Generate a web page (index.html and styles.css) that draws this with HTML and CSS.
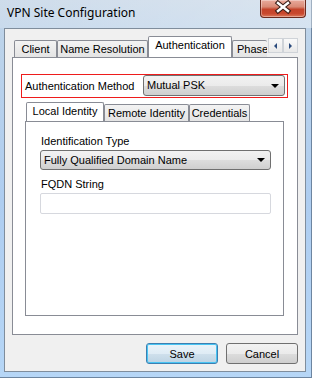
FILE: index.html
```html
<!DOCTYPE html>
<html>
<head>
    <title>VPN Site Configuration</title>
    <link rel="stylesheet" href="styles.css">
</head>
<body>
    <div class="window">
        <div class="titlebar">
            <span class="title">VPN Site Configuration</span>
            <div class="close">
                <svg width="46" height="18" viewBox="0 0 46 18">
                    <path d="M18 4 L28 12 M28 4 L18 12" stroke="#3a1e18" stroke-width="4.6" stroke-linecap="square"/>
                    <path d="M18 4 L28 12 M28 4 L18 12" stroke="#ffffff" stroke-width="2.4" stroke-linecap="square"/>
                </svg>
            </div>
        </div>

        <div class="client">
            <div class="tabctl outer">
                <div class="tabstrip">
                    <div class="tabs">
                        <div class="tab t-client">Client</div>
                        <div class="tab t-names">Name Resolution</div>
                        <div class="tab active t-auth">Authentication</div>
                        <div class="tab t-phase">Phase</div>
                    </div>
                    <div class="scroller">
                        <span class="sbtn"><i class="tri left"></i></span>
                        <span class="sbtn"><i class="tri right"></i></span>
                    </div>
                </div>
                <div class="panel">
                    <div class="method">
                        <span class="label">Authentication Method</span>
                        <div class="combo c-method">
                            <span>Mutual PSK</span>
                            <i class="arrow"></i>
                        </div>
                    </div>

                    <div class="tabctl inner">
                        <div class="tabstrip">
                            <div class="tabs">
                                <div class="tab active t-local">Local Identity</div>
                                <div class="tab t-remote">Remote Identity</div>
                                <div class="tab t-cred">Credentials</div>
                            </div>
                        </div>
                        <div class="panel">
                            <div class="label">Identification Type</div>
                            <div class="combo c-type">
                                <span>Fully Qualified Domain Name</span>
                                <i class="arrow"></i>
                            </div>
                            <div class="label l-fqdn">FQDN String</div>
                            <div class="textbox"></div>
                        </div>
                    </div>
                </div>
            </div>

            <div class="buttons">
                <button class="btn default">Save</button>
                <button class="btn">Cancel</button>
            </div>
        </div>
    </div>
</body>
</html>
```

FILE: styles.css
```css
*{
    padding: 0;
    margin: 0;
    box-sizing: border-box;
}

body{
    font-family: "Liberation Sans", Arial, sans-serif;
    font-size: 11px;
    color: #000;
}

.window{
    width: 312px;
    height: 378px;
    display: flex;
    flex-direction: column;
    background: linear-gradient(180deg, #c6d6e7 0px, #bcd3ea 40px, #aecdf0 200px, #b6d6f6 378px);
    box-shadow: inset -1px -1px 0 #6d85a0;
}

.titlebar{
    height: 28px;
    display: flex;
    align-items: flex-start;
    background: linear-gradient(90deg, rgba(255,255,255,0.15), rgba(255,255,255,0.35));
}

.title{
    font-family: "Noto Sans", "Open Sans", sans-serif;
    font-size: 12px;
    line-height: 16px;
    margin: 5px 0 0 7px;
    color: #000;
}

.close{
    margin-left: auto;
    margin-right: 6px;
    width: 46px;
    height: 18px;
    border: 1px solid #6b2a1e;
    border-top: 0;
    border-radius: 0 0 4px 4px;
    background: linear-gradient(180deg, #e9aa9c 0%, #d98a76 40%, #c4432a 55%, #c9492f 80%, #dc7a5c 100%);
    box-shadow: inset 0 0 0 1px rgba(255,255,255,0.35);
}

.close svg{
    display: block;
    margin: -1px 0 0 -1px;
}

.client{
    margin: 0 6px 0 4px;
    height: 344px;
    border: 1px solid #7f8d9c;
    background: #f0f0f0;
    padding: 7px;
    display: flex;
    flex-direction: column;
}

/* tab controls */
.tabctl{
    display: flex;
    flex-direction: column;
}

.outer{
    flex: 1;
}

.tabstrip{
    display: flex;
    align-items: flex-end;
}

.outer > .tabstrip{
    height: 21px;
}

.inner > .tabstrip{
    height: 19px;
}

.tabs{
    flex: 1;
    min-width: 0;
    display: flex;
    align-items: flex-end;
    overflow: hidden;
    height: 100%;
}

.outer .tabs{
    padding-left: 2px;
}

.inner .tabs{
    padding-left: 1px;
}

.tab{
    flex: none;
    height: 17px;
    border: 1px solid #898c95;
    border-bottom: 0;
    border-radius: 2px 2px 0 0;
    background: linear-gradient(180deg, #f3f3f3, #e4e4e4);
    text-align: center;
    line-height: 13px;
    padding-top: 2px;
    white-space: nowrap;
    overflow: hidden;
}

.tab.active{
    background: #fff;
    position: relative;
    z-index: 1;
    margin-bottom: -1px;
}

.outer .tab.active{
    height: 22px;
}

.inner .tab.active{
    height: 20px;
}

.t-client{ width: 43px; }
.t-names{ width: 91px; }
.t-auth{ width: 84px; }
.t-phase{ width: 35px; text-align: left; padding-left: 4px; border-right: 0; }
.t-local{ width: 78px; }
.t-remote{ width: 85px; }
.t-cred{ width: 61px; }

.scroller{
    align-self: flex-start;
    margin-top: 2px;
    display: flex;
}

.sbtn{
    width: 15px;
    height: 15px;
    border: 1px solid #cfd3d8;
    background: linear-gradient(180deg, #fafafa, #e8e8e8);
    display: flex;
    align-items: center;
    justify-content: center;
}

.tri{
    width: 0;
    height: 0;
    border-top: 3px solid transparent;
    border-bottom: 3px solid transparent;
}

.tri.left{ border-right: 3px solid #2a4a7c; }
.tri.right{ border-left: 3px solid #2a4a7c; }

.panel{
    flex: 1;
    background: #fff;
    border: 1px solid #898c95;
    display: flex;
    flex-direction: column;
}

.outer > .panel{
    padding-top: 16px;
}

/* authentication method row */
.method{
    margin: 0 9px 0 8px;
    height: 24px;
    border: 1px solid #ee1c1c;
    display: flex;
    align-items: flex-start;
    padding: 0 2px 0 3px;
}

.method .label{
    align-self: center;
    line-height: 13px;
}

.combo{
    height: 21px;
    border: 1px solid #707070;
    border-radius: 3px;
    background: linear-gradient(180deg, #f2f2f2 0%, #ebebeb 50%, #dddddd 51%, #cfcfcf 100%);
    display: flex;
    align-items: center;
    padding: 0 5px 0 3px;
    line-height: 13px;
}

.combo span{
    flex: 1;
}

.arrow{
    width: 0;
    height: 0;
    border-left: 4px solid transparent;
    border-right: 4px solid transparent;
    border-top: 4px solid #000;
}

.c-method{
    margin-left: auto;
    width: 142px;
}

.inner{
    flex: 1;
    margin: 4px 13px 18px 12px;
}

.inner > .panel{
    padding: 13px 0 0 14px;
}

.inner .label{
    line-height: 13px;
    padding-left: 1px;
}

.c-type{
    width: 231px;
    height: 20px;
    margin-top: 2px;
}

.l-fqdn{
    margin-top: 8px;
}

.textbox{
    margin-top: 2px;
    width: 231px;
    height: 21px;
    border: 1px solid #d6d8de;
    border-radius: 2px;
    background: #fff;
}

/* buttons */
.buttons{
    margin-top: 8px;
    display: flex;
    justify-content: flex-end;
    gap: 8px;
}

.btn{
    width: 72px;
    height: 21px;
    font-family: "Liberation Sans", Arial, sans-serif;
    font-size: 11px;
    border: 1px solid #707070;
    border-radius: 3px;
    background: linear-gradient(180deg, #f2f2f2 0%, #ebebeb 50%, #dddddd 51%, #cfcfcf 100%);
    color: #000;
}

.btn.default{
    border-color: #3c7fb1;
    background: linear-gradient(180deg, #eaf3f9 0%, #dfecf5 50%, #cfe0ec 51%, #bdd3e3 100%);
    box-shadow: inset 0 0 0 1px #48c4f3;
}
```
